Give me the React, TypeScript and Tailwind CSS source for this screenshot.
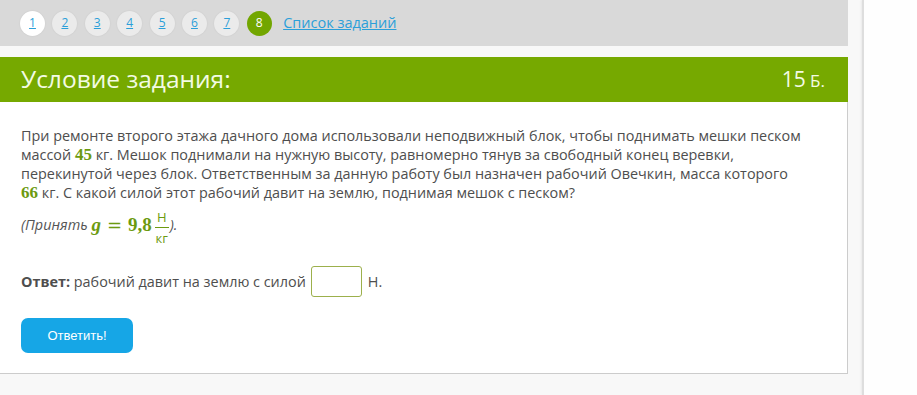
const pages = [1, 2, 3, 4, 5, 6, 7];

function Mn({ children }: { children: React.ReactNode }) {
  return (
    <span className="font-['Liberation_Serif',serif] font-bold text-[17px] text-[#6c9a10]">
      {children}
    </span>
  );
}

export default function App() {
  return (
    <div className="flex w-[917px] h-[395px] overflow-hidden bg-[#f8f8f8] font-['Open_Sans',sans-serif]">
      <div className="w-[848px] shrink-0 flex flex-col">
        <nav className="h-[46px] bg-[#d9d9d9] flex items-center pl-[20px] gap-[7.4px]">
          {pages.map((p) => (
            <a
              key={p}
              href="#"
              className={`w-[25px] h-[25px] rounded-full flex items-center justify-center text-[12px] text-[#2b9fd9] underline shadow-[0_0_2px_rgba(0,0,0,0.08)] ${
                p === 1 ? "bg-white" : "bg-[#ebebeb]"
              }`}
            >
              {p}
            </a>
          ))}
          <span className="w-[25px] h-[25px] rounded-full flex items-center justify-center text-[12px] text-white bg-[#72a600]">
            8
          </span>
          <a href="#" className="ml-[4px] text-[14.5px] text-[#2b9fd9] underline">
            Список заданий
          </a>
        </nav>
        <div className="h-[11px]" />
        <header className="h-[45px] bg-[#76a900] flex items-center justify-between pl-[21px] pr-[23px] text-[#f3fbe4]">
          <h1 className="text-[24.5px] leading-none">Условие задания:</h1>
          <span className="leading-none">
            <span className="text-[21px]">15</span>
            <span className="text-[17px]"> Б.</span>
          </span>
        </header>
        <main className="h-[272px] bg-white border-r border-b border-[#cccccc] pl-[21px] pt-[24px] text-[14.4px] text-[#4e4e4e]">
          <div className="leading-[19px]">
            <div className="whitespace-nowrap">
              При ремонте второго этажа дачного дома использовали неподвижный блок, чтобы поднимать мешки песком
            </div>
            <div className="whitespace-nowrap">
              массой <Mn>45</Mn> кг. Мешок поднимали на нужную высоту, равномерно тянув за свободный конец веревки,
            </div>
            <div className="whitespace-nowrap">
              перекинутой через блок. Ответственным за данную работу был назначен рабочий Овечкин, масса которого
            </div>
            <div className="whitespace-nowrap">
              <Mn>66</Mn> кг. С какой силой этот рабочий давит на землю, поднимая мешок с песком?
            </div>
          </div>
          <div className="flex items-center h-[42px] mt-[2px] italic text-[#555]">
            <span>(Принять&nbsp;</span>
            <span className="font-['Liberation_Serif',serif] text-[19px] text-[#6c9a10] flex items-center">
              <span className="italic font-bold">g</span>
              <span className="not-italic font-['DejaVu_Serif',serif] text-[18px] mx-[6px]">=</span>
              <span className="not-italic font-bold">9,8</span>
            </span>
            <span className="flex flex-col items-center not-italic text-[13px] leading-[16px] text-[#6c9a10] ml-[3px] mt-[4px]">
              <span>Н</span>
              <span className="w-[14px] border-t border-[#6c9a10] my-[2px]" />
              <span>кг</span>
            </span>
            <span className="ml-[1px]">).</span>
          </div>
          <div className="flex items-center mt-[20px]">
            <span className="font-bold">Ответ:</span>
            <span>&nbsp;рабочий давит на землю с силой</span>
            <input
              type="text"
              className="ml-[5px] w-[51px] h-[31px] border border-[#9cb04c] rounded-[3px] outline-none"
            />
            <span className="ml-[6px]">Н.</span>
          </div>
          <button className="mt-[21px] w-[112px] h-[35px] rounded-[7px] bg-[#16a6e6] text-white text-[13px] font-['Liberation_Sans',sans-serif]">
            Ответить!
          </button>
        </main>
      </div>
      <div className="w-[14px] shrink-0" />
      <div className="flex-1 bg-[#fefefe] border-l-2 border-[#dedede] shadow-[-1px_0_2px_rgba(0,0,0,0.06)]" />
    </div>
  );
}
